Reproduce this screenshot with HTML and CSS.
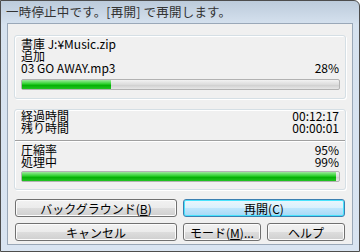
FILE: index.html
```html
<!doctype html>
<html lang="ja">
<head>
    <meta charset="UTF-8">
    <title>一時停止中</title>
    <link rel="stylesheet" href="styles.css">
</head>
<body>
<div class="window">
    <div class="caption">一時停止中です。[再開] で再開します。</div>
    <div class="client">
        <div class="group first">
            <div class="row">書庫 J:¥Music.zip</div>
            <div class="row">追加</div>
            <div class="row"><span>03 GO AWAY.mp3</span><span>28%</span></div>
            <div class="bar"><div class="fill" style="width:28%"></div></div>
        </div>
        <div class="group second">
            <div class="row"><span>経過時間</span><span>00:12:17</span></div>
            <div class="row"><span>残り時間</span><span>00:00:01</span></div>
            <div class="sep"></div>
            <div class="row"><span>圧縮率</span><span>95%</span></div>
            <div class="row"><span>処理中</span><span>99%</span></div>
            <div class="bar"><div class="fill" style="width:99%"></div></div>
        </div>
        <div class="buttons">
            <button>バックグラウンド(<u>B</u>)</button>
            <button class="default">再開(C)</button>
            <button>キャンセル</button>
            <div class="pair">
                <button>モード(<u>M</u>)...</button>
                <button>ヘルプ</button>
            </div>
        </div>
    </div>
</div>
</body>
</html>
```

FILE: styles.css
```css
body{margin:0; padding:0; background:#fff;}
.window{width:358px; height:250px; border:1px solid #4d4d4d; border-radius:0 6px 0 0;
    background:linear-gradient(#bccbdb 0, #d6e2ef 24px, #d9e4f1 100%);
    font-family:"Noto Sans CJK JP", "Liberation Sans", sans-serif; font-size:12px; color:#000;
    display:flex; flex-direction:column;}
.caption{height:22px; line-height:22px; padding-left:5px; color:#333; font-size:12.5px; letter-spacing:0.2px;}
.client{flex:1; margin:0 6px 6px 6px; background:#f0f0f0; border:1px solid #9aa8b8; padding:11px 6px 0 6px;}
.group{box-sizing:border-box; border:1px solid #d5dfe5; border-radius:3px; box-shadow:inset 1px 1px 0 #fff, 1px 1px 0 #fff; padding:0 5px 0 6px;}
.first{height:64px; padding-top:2px;}
.second{margin-top:10px; height:81px;}
.row{height:12px; line-height:12px; display:flex; justify-content:space-between; white-space:nowrap;}
.row span:last-child{padding-right:1px;}
.first .bar{margin-top:5px;}
.sep{height:1px; background:#a0a0a0; border-bottom:1px solid #fff; margin:6px -5px 2px -6px;}
.bar{height:9px; border:1px solid #b2b2b2; border-radius:2px; margin-top:3px;
    background:linear-gradient(#f2f2f2, #dcdcdc 50%, #cdcdcd 51%, #e6e6e6);}
.fill{height:100%; background:linear-gradient(#9ee89e, #37d437 40%, #06b106 60%, #22c322);}
.buttons{display:grid; grid-template-columns:1fr 1fr; column-gap:6px; row-gap:6px; margin:9px 1px 0 1px;}
.pair{display:grid; grid-template-columns:1fr 1fr; column-gap:6px;}
button{height:18px; padding:0; font-family:inherit; font-size:12px; color:#000;
    border:1px solid #707070; border-radius:3px;
    background:linear-gradient(#f2f2f2 0, #ebebeb 50%, #dddddd 51%, #cfcfcf 100%);
    box-shadow:inset 0 0 0 1px #fcfcfc;}
button.default{border-color:#3c7fb1; background:linear-gradient(#eaf6fd 0, #d9f0fc 50%, #bee6fd 51%, #a7d9f5 100%);
    box-shadow:inset 0 0 0 1px #48e3fd;}
```
